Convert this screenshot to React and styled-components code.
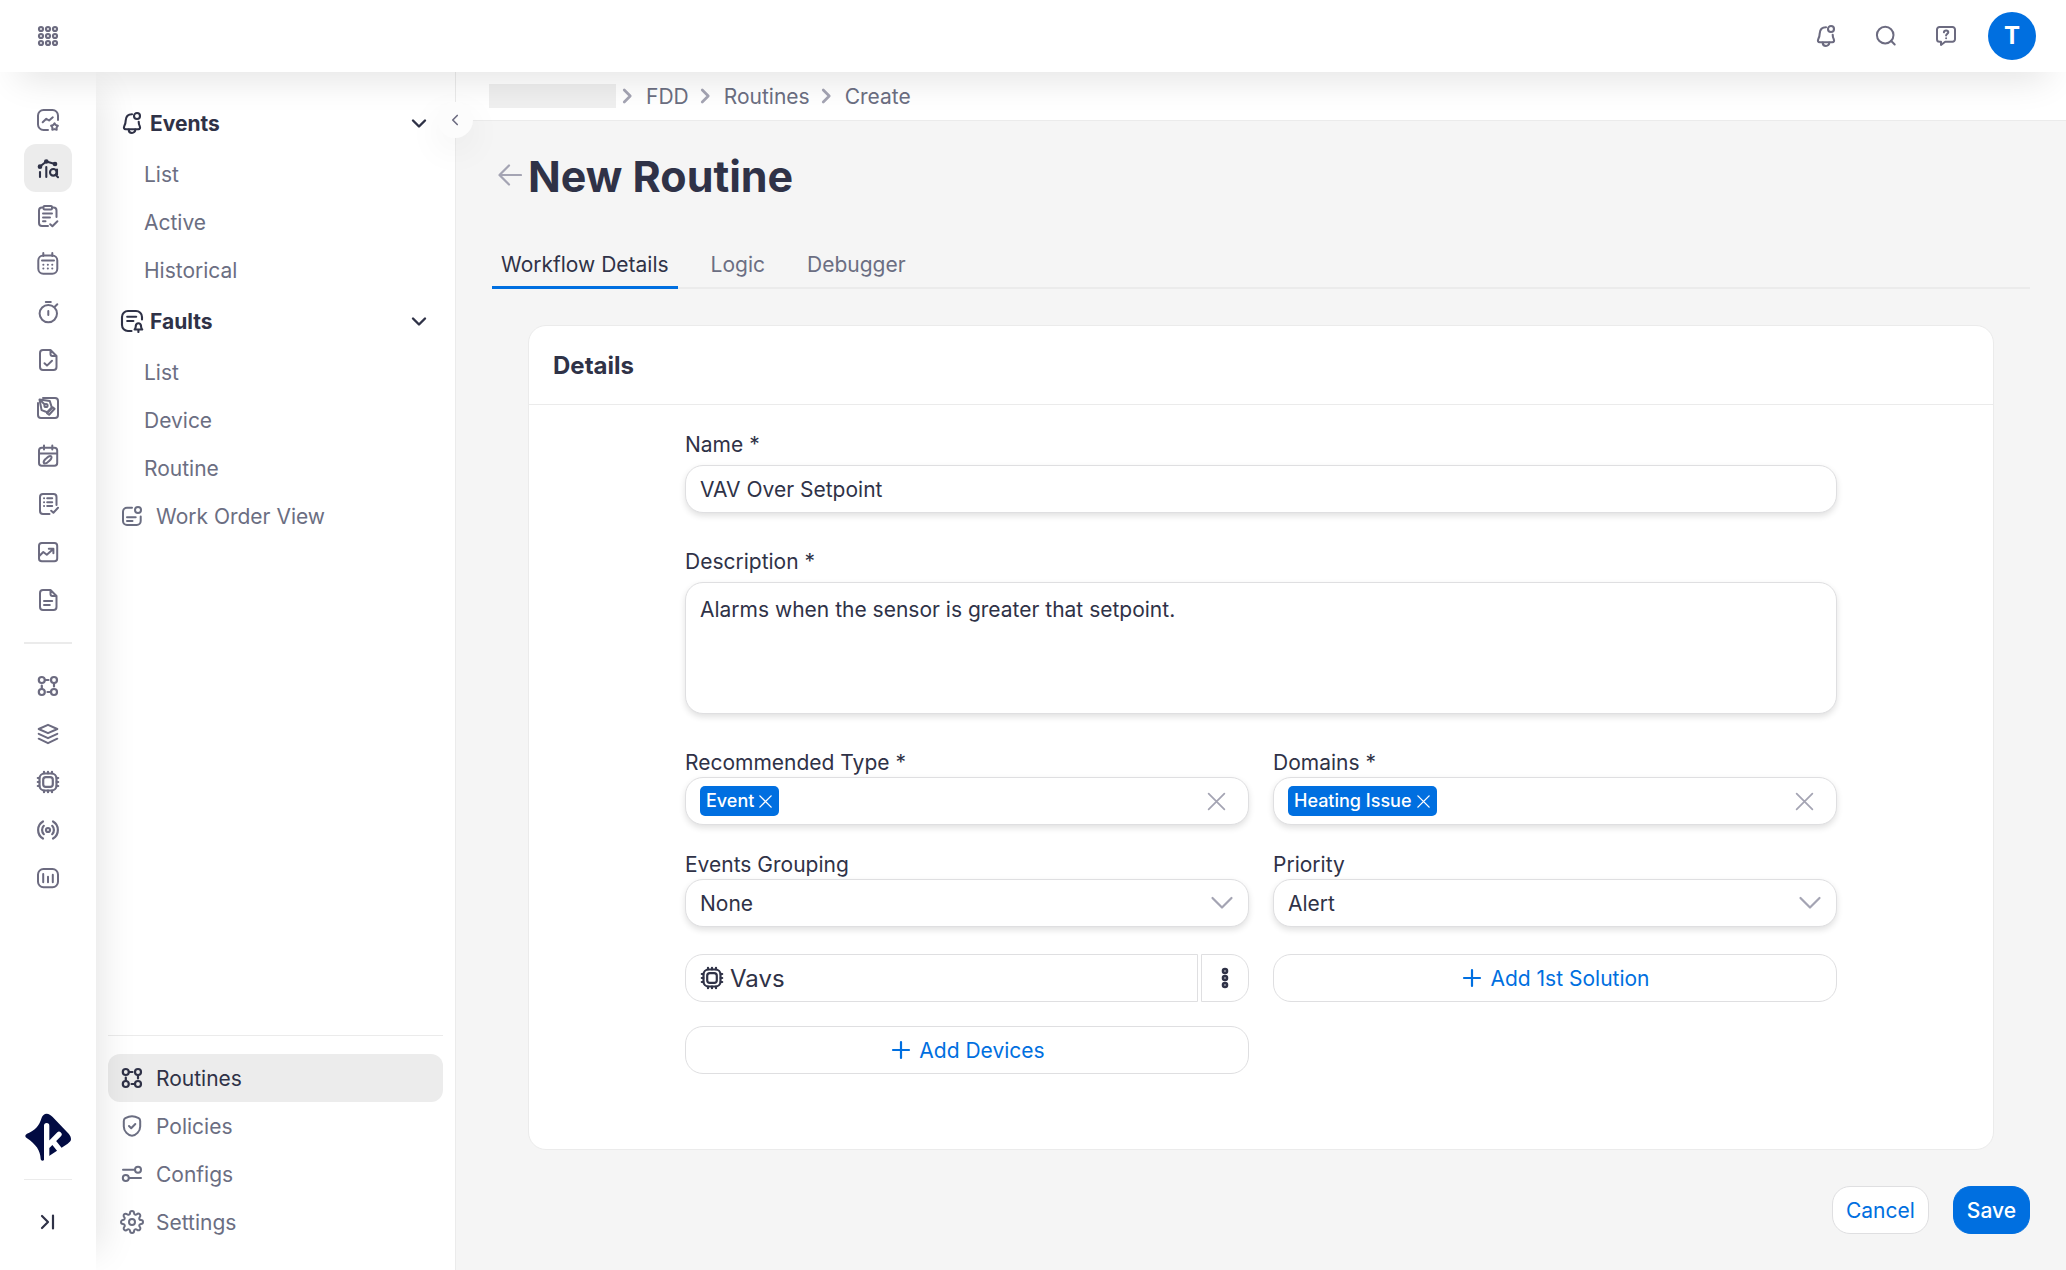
import styled, { createGlobalStyle, css } from 'styled-components';
import { useState } from 'react';
import { FiSettings } from 'react-icons/fi';

const color = {
  text: '#2f3247',
  muted: '#6b6e82',
  icon: '#6c6b80',
  faint: '#a4a4b3',
  blue: '#006fe0',
  page: '#f5f5f5',
  active: '#ececec',
  line: '#ebebeb',
  border: '#dfdfe1',
};

/* ---------- icons ---------- */

const Icon = ({ size = 24, stroke = 2, children }) => (
  <svg
    width={size}
    height={size}
    viewBox='0 0 24 24'
    fill='none'
    stroke='currentColor'
    strokeWidth={stroke}
    strokeLinecap='round'
    strokeLinejoin='round'
    aria-hidden='true'
  >
    {children}
  </svg>
);

const GridIcon = () => (
  <Icon stroke={2.2}>
    {[5, 12, 19].map(y =>
      [5, 12, 19].map(x => <circle key={`${x}-${y}`} cx={x} cy={y} r='2' />)
    )}
  </Icon>
);

const BellIcon = () => (
  <Icon stroke={2.1}>
    <path d='M12 3.3C8 3.3 5.9 6 5.7 9.5c-.1 2.8-.5 4-1.4 5.6-.8 1.6-.3 3.1 1.4 3.1h12.6c1.7 0 2.2-1.5 1.4-3.1-.7-1.3-1-2.6-1-4.3' />
    <path d='M8.7 18.5c0 4.6 6.600 4.600 6.600 0' />
    <circle cx='17' cy='5' r='3' />
  </Icon>
);

const SearchIcon = () => (
  <Icon>
    <circle cx='11.2' cy='11.1' r='8.3' />
    <path d='m17 16.800 3.700 3.700' />
  </Icon>
);

const HelpIcon = () => (
  <Icon>
    <path d='M5.500 3h13A2.500 2.500 0 0 1 21 5.500v9.700a2.500 2.500 0 0 1-2.500 2.500h-7.300L7 21v-3.300H5.500A2.500 2.500 0 0 1 3 15.200V5.500A2.500 2.500 0 0 1 5.500 3Z' />
    <path d='M9.900 8.300c.2-2.600 4.400-2.400 4.400 0 0 1.600-2.200 1.500-2.200 3.200M12.100 14.200v.1' />
  </Icon>
);

const DashboardIcon = () => (
  <Icon>
    <path d='M12 22H7.500A5.500 5.500 0 0 1 2 16.500v-9A5.500 5.500 0 0 1 7.500 2h9A5.500 5.500 0 0 1 22 7.500V12' />
    <path d='m6.700 14.300 3.600-3.500 2.800 1.700 3.700-3.200' />
    <path d='m18.500 15.300 1.200 1.700 2.200.6-1.300 1.900.1 2.200-2.200-.6-2.200.6.1-2.200-1.300-1.900 2.200-.6Z' />
  </Icon>
);

const FddIcon = () => (
  <Icon stroke={2.1}>
    <path d='m4 10.500 6.300-5L19 8' />
    <circle cx='4' cy='10.700' r='1.300' />
    <circle cx='10.300' cy='5.500' r='1.300' />
    <circle cx='19' cy='8' r='1.300' />
    <path d='M4 16v5M10.300 11v10' />
    <circle cx='17.300' cy='16.300' r='3.300' />
    <path d='M21 13.500v5.300M19.600 18.800 22 21.200' />
  </Icon>
);

const ClipboardIcon = () => (
  <Icon>
    <path d='M7 3.500H6a3 3 0 0 0-3 3V19a3 3 0 0 0 3 3h6M16.500 3.500h1a3 3 0 0 1 3 3V13' />
    <path d='M8.500 2H15a1 1 0 0 1 1 1v1.500a1 1 0 0 1-1 1H8.500a1 1 0 0 1-1-1V3a1 1 0 0 1 1-1Z' />
    <path d='M7 9.500h9M7 13.400h7M7 17.300h2.500M14.200 20.200l2.200 2 5-5' />
  </Icon>
);

const CalendarIcon = () => (
  <Icon>
    <rect x='2.300' y='3.500' width='19' height='18.300' rx='5' />
    <path d='M7.300 1v3M16.300 1v3M6 8.500h12' />
    <path d='M7.300 12.800h.1M11.800 12.800h.1M16.200 12.800h.1M7.300 16.600h.1M11.800 16.600h.1M16.200 16.600h.1' />
  </Icon>
);

const StopwatchIcon = () => (
  <Icon>
    <circle cx='12.300' cy='13.600' r='8.700' />
    <path d='M9.800 2h5M12.300 11v4M19 6.500l2.300-2.300' />
  </Icon>
);

const FileShape = () => (
  <path d='M14.500 2H7a3 3 0 0 0-3 3v14a3 3 0 0 0 3 3h10.500a3 3 0 0 0 3-3V8l-6-6Zm0 0v4a2 2 0 0 0 2 2h4' />
);

const FileCheckIcon = () => (
  <Icon>
    <FileShape />
    <path d='m8.500 15.200 2.500 2.400 5-4.800' />
  </Icon>
);

const PenToolIcon = () => (
  <Icon>
    <path d='M7 2h12a3 3 0 0 1 3 3v14a3 3 0 0 1-3 3H5a3 3 0 0 1-3-3V7' />
    <path d='m3.500 3.500 10.300 1.600 2 6.400-4.600 4.800-5.600-2.200Z' />
    <circle cx='10' cy='9.500' r='1.600' />
    <path d='m4 4 4.500 4.200M11 17.300l5.700-6 1.900 1.500-5.500 6Z' />
  </Icon>
);

const CalendarEditIcon = () => (
  <Icon>
    <rect x='3' y='3.800' width='18.200' height='18' rx='2.800' />
    <path d='M8 1.500v4M16.300 1.500v4M3 9.400h18' />
    <path d='M8 19.300c-.8-1.200 0-2.800 1.500-4.200 2-2 4.300-3.700 5.600-2.800 1.200 1.200-.2 3.100-1.700 4.500-1.600 1.600-4.200 3.300-5.400 2.500Z' />
  </Icon>
);

const ListCheckIcon = () => (
  <Icon>
    <path d='M13.500 22H7a3 3 0 0 1-3-3V5a3 3 0 0 1 3-3h10.500a3 3 0 0 1 3 3v8' />
    <path d='M8 6.300h.1M8 10.200h.1M8 14.100h.1M11.200 6.300h5M11.200 10.200h5M11.200 14.100h5M15.200 18.700l2.200 2 4.600-5' />
  </Icon>
);

const TrendIcon = () => (
  <Icon>
    <rect x='3' y='3' width='18.200' height='18.200' rx='2.800' />
    <path d='m3.300 16 4-4 3.500 2.800 6.200-5.600M12.800 8.800h4.600v4.400' />
  </Icon>
);

const FileTextIcon = () => (
  <Icon>
    <FileShape />
    <path d='M8 13h8.200M8 17h5.800' />
  </Icon>
);

const NodesIcon = () => (
  <Icon stroke={2.2}>
    <circle cx='5.800' cy='6' r='3' />
    <circle cx='18' cy='6' r='3' />
    <circle cx='5.800' cy='18' r='3' />
    <circle cx='18' cy='18' r='3' />
    <path d='M9 6h3.500M18 9.300v3.200M5.800 14.700v-3.200M14.700 18h-3.200' />
  </Icon>
);

const LayersIcon = () => (
  <Icon>
    <path d='m12 2.800 9.300 4.200L12 11.200 2.700 7Z' />
    <path d='m2.700 11.800 9.300 4.400 9.300-4.400M2.700 16.700 12 21.200l9.300-4.500' />
  </Icon>
);

const ChipIcon = () => (
  <Icon stroke={2.2}>
    <rect x='3.500' y='3.500' width='17' height='17' rx='5' />
    <rect x='7.200' y='7.200' width='9.600' height='9.600' rx='2.600' />
    <path d='M8 1.800v1.500M12 1.800v1.500M16 1.800v1.500M8 20.700v1.500M12 20.700v1.500M16 20.700v1.500M1.800 8h1.500M1.800 12h1.500M1.800 16h1.500M20.700 8h1.500M20.700 12h1.500M20.700 16h1.500' />
  </Icon>
);

const BroadcastIcon = () => (
  <Icon stroke={2.2}>
    <circle cx='12' cy='12' r='2' />
    <path d='M7.800 7.800a6 6 0 0 0 0 8.400M16.200 7.800a6 6 0 0 1 0 8.400M7 3.500c-6.500 3.700-6.500 13.300 0 17M17 3.500c6.500 3.700 6.500 13.300 0 17' />
  </Icon>
);

const BarsIcon = () => (
  <Icon>
    <rect x='2' y='3' width='20' height='18.200' rx='5.500' />
    <path d='M7.200 8v8.200M12 10.800v5.400M16.800 8.800v7.400' />
  </Icon>
);

const FaultIcon = () => (
  <Icon stroke={2.1}>
    <path d='M11.500 22H8a6 6 0 0 1-6-6V8a6 6 0 0 1 6-6h8a6 6 0 0 1 6 6v2.500' />
    <path d='M7.200 7.700h9M7.200 12h6.200' />
    <path d='M14.600 20.500c1-1 1-2 1.200-3.500.3-3.600 4.900-3.600 5.200 0 .2 1.500.2 2.500 1.200 3.500ZM18.400 20.500V23' />
  </Icon>
);

const WorkOrderIcon = () => (
  <Icon>
    <path d='M12 3.800H7a4 4 0 0 0-4 4V17a4 4 0 0 0 4 4h9.700a4 4 0 0 0 4-4v-4.500' />
    <circle cx='18' cy='6' r='3' />
    <path d='M7 13.300h8.700M7 17h5.500' />
  </Icon>
);

const ShieldIcon = () => (
  <Icon>
    <path d='M12 2.300c2.600 0 5 1 6.700 1.900 1 .6 1.500 1.500 1.500 2.700v5.500c0 5-4.400 9.300-8.200 9.300s-8.200-4.300-8.200-9.300V6.900c0-1.200.5-2.100 1.500-2.700C7 3.300 9.400 2.300 12 2.300Z' />
    <path d='m9 12 2.200 2.200L15.300 10' />
  </Icon>
);

const ConfigIcon = () => (
  <Icon>
    <circle cx='18' cy='7.800' r='3' />
    <circle cx='5.800' cy='16' r='3' />
    <path d='M3 7.800h12M9 16h12' />
  </Icon>
);

const ExpandIcon = () => (
  <Icon stroke={2.2}>
    <path d='m6 6 6 6-6 6M17 5.500v13' />
  </Icon>
);

const ChevronDown = () => (
  <Icon stroke={2.4}>
    <path d='m6 9.500 6 6 6-6' />
  </Icon>
);

const SelectArrow = () => (
  <Icon stroke={2.2}>
    <path d='m2.500 7 9.500 9.500L21.500 7' />
  </Icon>
);

const ChevronLeft = () => (
  <Icon size={18} stroke={2.2}>
    <path d='m15 6-6 6 6 6' />
  </Icon>
);

const CrumbArrow = () => (
  <Icon size={18} stroke={3.6}>
    <path d='m7 4 8 8-8 8' />
  </Icon>
);

const BackArrow = () => (
  <Icon stroke={2.2}>
    <path d='M23 12H2M11 2.500 1.500 12 11 21.500' />
  </Icon>
);

const CrossIcon = ({ size, stroke }) => (
  <Icon size={size} stroke={stroke}>
    <path d='m3 3 18 18M21 3 3 21' />
  </Icon>
);

const PlusIcon = () => (
  <Icon stroke={2.2}>
    <path d='M12 4v16M4 12h16' />
  </Icon>
);

const DotsIcon = () => (
  <Icon stroke={2.6}>
    <circle cx='12' cy='5' r='2' />
    <circle cx='12' cy='12' r='2' />
    <circle cx='12' cy='19' r='2' />
  </Icon>
);

const Logo = () => (
  <svg width='48' height='48' viewBox='0 0 144 144' role='img' aria-label='Home'>
    <path
      fill='#020b42'
      d='M68 2c7 0 12 4 18 10l48 50c5 6 7 11 7 17 0 5-4 9-10 13l-57 38-14 11c-3 3-9 3-10-3-1-26-14-44-42-63-6-4-5-10 1-13 24-10 36-22 44-48 2-7 8-12 15-12Z'
    />
    <path
      fill='none'
      stroke='#fff'
      strokeWidth='16'
      strokeLinecap='round'
      d='M68 38v112M105 64 72 98M86 84l24 30'
    />
  </svg>
);

/* ---------- data ---------- */

const railMain = [
  ['Dashboards', DashboardIcon],
  ['Fault detection', FddIcon],
  ['Tasks', ClipboardIcon],
  ['Schedules', CalendarIcon],
  ['Timers', StopwatchIcon],
  ['Approvals', FileCheckIcon],
  ['Designer', PenToolIcon],
  ['Planner', CalendarEditIcon],
  ['Checklists', ListCheckIcon],
  ['Trends', TrendIcon],
  ['Reports', FileTextIcon],
];

const railTools = [
  ['Workflows', NodesIcon],
  ['Layers', LayersIcon],
  ['Devices', ChipIcon],
  ['Signals', BroadcastIcon],
  ['Meters', BarsIcon],
];

const groups = [
  { name: 'Events', Glyph: BellIcon, links: ['List', 'Active', 'Historical'] },
  { name: 'Faults', Glyph: FaultIcon, links: ['List', 'Device', 'Routine'] },
];

const bottomLinks = [
  ['Routines', NodesIcon],
  ['Policies', ShieldIcon],
  ['Configs', ConfigIcon],
  ['Settings', () => <FiSettings size={24} />],
];

const tabs = ['Workflow Details', 'Logic', 'Debugger'];

/* ---------- pieces ---------- */

const Header = () => (
  <HeaderBar>
    <IconButton type='button' aria-label='Apps'>
      <GridIcon />
    </IconButton>
    <HeaderTools>
      <IconButton type='button' aria-label='Notifications'>
        <BellIcon />
      </IconButton>
      <IconButton type='button' aria-label='Search'>
        <SearchIcon />
      </IconButton>
      <IconButton type='button' aria-label='Help'>
        <HelpIcon />
      </IconButton>
      <Avatar type='button'>T</Avatar>
    </HeaderTools>
  </HeaderBar>
);

const RailNav = () => (
  <Rail>
    {railMain.map(([label, Glyph], i) => (
      <RailLink key={label} href='#' aria-label={label} $active={i === 1}>
        <Glyph />
      </RailLink>
    ))}
    <RailRule $thick />
    {railTools.map(([label, Glyph]) => (
      <RailLink key={label} href='#' aria-label={label}>
        <Glyph />
      </RailLink>
    ))}
    <RailFoot>
      <Logo />
      <RailRule />
      <IconButton type='button' aria-label='Expand menu' $dark>
        <ExpandIcon />
      </IconButton>
    </RailFoot>
  </Rail>
);

const SideNav = () => {
  const [open, setOpen] = useState({ Events: true, Faults: true });

  return (
    <Side>
      <nav>
        {groups.map(({ name, Glyph, links }) => (
          <div key={name}>
            <GroupButton
              type='button'
              aria-expanded={open[name]}
              onClick={() => setOpen({ ...open, [name]: !open[name] })}
            >
              <Glyph />
              <Text>{name}</Text>
              <ChevronDown />
            </GroupButton>
            {open[name] &&
              links.map(link => (
                <SubLink key={link} href='#'>
                  <Text>{link}</Text>
                </SubLink>
              ))}
          </div>
        ))}
        <SideLink href='#'>
          <WorkOrderIcon />
          <Text>Work Order View</Text>
        </SideLink>
      </nav>
      <SideFoot>
        {bottomLinks.map(([label, Glyph], i) => (
          <SideLink key={label} href='#' $active={i === 0}>
            <Glyph />
            <Text>{label}</Text>
          </SideLink>
        ))}
      </SideFoot>
      <Collapse type='button' aria-label='Collapse'>
        <ChevronLeft />
      </Collapse>
    </Side>
  );
};

const TagField = ({ id, label, tag }) => (
  <Field>
    <Label htmlFor={id}>{label}</Label>
    <TagBox>
      <Tag>
        {tag}
        <TagRemove type='button' aria-label={`Remove ${tag}`}>
          <CrossIcon size={15} stroke={2.2} />
        </TagRemove>
      </Tag>
      <TagInput id={id} />
      <ClearButton type='button' aria-label='Clear'>
        <CrossIcon size={21} stroke={2} />
      </ClearButton>
    </TagBox>
  </Field>
);

const SelectField = ({ id, label, options }) => (
  <Field>
    <Label htmlFor={id}>{label}</Label>
    <SelectBox>
      <Select id={id}>
        {options.map(o => (
          <option key={o}>{o}</option>
        ))}
      </Select>
      <SelectArrow />
    </SelectBox>
  </Field>
);

const App = () => {
  const [tab, setTab] = useState(tabs[0]);

  return (
    <Page>
      <GlobalStyle />
      <Header />
      <Body>
        <RailNav />
        <SideNav />
        <Main>
          <Crumbs aria-label='Breadcrumb'>
            <CrumbBlank />
            <CrumbArrow />
            <a href='#'>FDD</a>
            <CrumbArrow />
            <a href='#'>Routines</a>
            <CrumbArrow />
            <a href='#'>Create</a>
          </Crumbs>
          <Content>
            <TitleRow>
              <BackLink href='#' aria-label='Back'>
                <BackArrow />
              </BackLink>
              <Title>New Routine</Title>
            </TitleRow>
            <Tabs role='tablist'>
              {tabs.map(t => (
                <Tab
                  key={t}
                  type='button'
                  role='tab'
                  aria-selected={t === tab}
                  $active={t === tab}
                  onClick={() => setTab(t)}
                >
                  {t}
                </Tab>
              ))}
            </Tabs>
            <Card>
              <CardTitle>Details</CardTitle>
              <Form>
                <WideField>
                  <Label htmlFor='name'>Name *</Label>
                  <TextInput id='name' defaultValue='VAV Over Setpoint' />
                </WideField>
                <WideField>
                  <Label htmlFor='description'>Description *</Label>
                  <TextArea
                    id='description'
                    defaultValue='Alarms when the sensor is greater that setpoint.'
                  />
                </WideField>
                <TagField id='type' label='Recommended Type *' tag='Event' />
                <TagField id='domains' label='Domains *' tag='Heating Issue' />
                <SelectField id='grouping' label='Events Grouping' options={['None', 'Device']} />
                <SelectField id='priority' label='Priority' options={['Alert', 'Fault']} />
                <Column>
                  <DeviceRow>
                    <DeviceName type='button'>
                      <ChipIcon />
                      <Text>Vavs</Text>
                    </DeviceName>
                    <DeviceMenu type='button' aria-label='Device options'>
                      <DotsIcon />
                    </DeviceMenu>
                  </DeviceRow>
                  <AddButton type='button'>
                    <PlusIcon />
                    <Text>Add Devices</Text>
                  </AddButton>
                </Column>
                <Column>
                  <AddButton type='button'>
                    <PlusIcon />
                    <Text>Add 1st Solution</Text>
                  </AddButton>
                </Column>
              </Form>
            </Card>
            <Actions>
              <ActionButton type='button'>
                <Text>Cancel</Text>
              </ActionButton>
              <ActionButton type='button' $primary>
                <Text>Save</Text>
              </ActionButton>
            </Actions>
          </Content>
        </Main>
      </Body>
    </Page>
  );
};

export default App;

/* ---------- styles ---------- */

const GlobalStyle = createGlobalStyle`
  *, *::before, *::after {
    box-sizing: border-box;
  }
  body {
    margin: 0;
    background: ${color.page};
    color: ${color.text};
    font-family: Inter, 'Open Sans', sans-serif;
    font-size: 21px;
    line-height: 30px;
  }
  button, input, select, textarea {
    margin: 0;
    padding: 0;
    border: 0;
    background: none;
    color: inherit;
    font: inherit;
  }
  button {
    cursor: pointer;
  }
  a {
    color: inherit;
    text-decoration: none;
  }
  svg {
    display: block;
    flex-shrink: 0;
  }
`;

const Page = styled.div`
  display: flex;
  flex-direction: column;
  min-height: 100vh;
`;

/* drops the text a touch so it centers on the icons */
const Text = styled.span`
  display: block;
  padding-top: 2px;
`;

const HeaderBar = styled.header`
  position: relative;
  z-index: 3;
  display: flex;
  justify-content: space-between;
  align-items: center;
  height: 72px;
  padding: 0 30px 0 24px;
  background: #fff;
  box-shadow: 0 24px 36px -18px rgba(0, 0, 0, 0.12);
`;

const HeaderTools = styled.div`
  display: flex;
  align-items: center;
  gap: 12px;

  > :last-child {
    margin-left: 6px;
  }
`;

const IconButton = styled.button`
  display: flex;
  justify-content: center;
  align-items: center;
  width: 48px;
  height: 48px;
  color: ${props => (props.$dark ? color.text : color.icon)};
`;

const Avatar = styled.button`
  width: 48px;
  height: 48px;
  border-radius: 50%;
  background: ${color.blue};
  color: #fff;
  font-size: 24px;
  font-weight: 700;
`;

const Body = styled.div`
  display: flex;
  flex: 1;
`;

const Rail = styled.nav`
  position: relative;
  z-index: 2;
  display: flex;
  flex-direction: column;
  align-items: center;
  flex: 0 0 96px;
  padding: 24px 0;
  background: #fff;
  box-shadow: 24px 0 36px -18px rgba(0, 0, 0, 0.1);
`;

const RailLink = styled.a`
  display: flex;
  justify-content: center;
  align-items: center;
  width: 48px;
  height: 48px;
  border-radius: 12px;
  color: ${props => (props.$active ? color.text : color.icon)};
  background: ${props => (props.$active ? color.active : 'transparent')};
`;

const RailRule = styled.hr`
  width: 48px;
  height: ${props => (props.$thick ? 2 : 1)}px;
  margin: 18px 0;
  border: 0;
  background: ${color.line};
`;

const RailFoot = styled.div`
  display: flex;
  flex-direction: column;
  align-items: center;
  margin-top: auto;
`;

const Side = styled.aside`
  position: relative;
  display: flex;
  flex-direction: column;
  flex: 0 0 360px;
  padding: 24px 12px;
  background: #fff;
  border-right: 1px solid ${color.line};
`;

const sideRow = css`
  display: flex;
  align-items: center;
  width: 100%;
  padding: 0 12px;
`;

const GroupButton = styled.button`
  ${sideRow}
  gap: 6px;
  height: 54px;
  font-weight: 700;

  svg:last-child {
    margin-left: auto;
  }
`;

const SubLink = styled.a`
  ${sideRow}
  height: 48px;
  padding-left: 36px;
  color: ${color.muted};
`;

const SideLink = styled.a`
  ${sideRow}
  gap: 12px;
  height: 48px;
  border-radius: 12px;
  color: ${props => (props.$active ? color.text : color.muted)};
  background: ${props => (props.$active ? color.active : 'transparent')};
`;

const SideFoot = styled.nav`
  margin-top: auto;
  padding-top: 18px;
  border-top: 1px solid ${color.line};
`;

const Collapse = styled.button`
  position: absolute;
  z-index: 4;
  top: 30px;
  right: -18px;
  display: flex;
  justify-content: center;
  align-items: center;
  width: 36px;
  height: 36px;
  border-radius: 50%;
  background: #fcfcfc;
  color: ${color.icon};
  box-shadow: 0 12px 36px rgba(0, 0, 0, 0.06);
`;

const Main = styled.main`
  flex: 1;
  min-width: 0;
`;

const Crumbs = styled.nav`
  display: flex;
  align-items: center;
  height: 49px;
  padding: 0 33px;
  background: #fff;
  border-bottom: 1px solid ${color.line};
  color: ${color.muted};

  a {
    padding-top: 2px;
  }
  svg {
    color: ${color.faint};
    margin: 0 9px 0 8px;
  }
  svg:first-of-type {
    margin-left: 3px;
  }
`;

const CrumbBlank = styled.span`
  width: 127px;
  height: 24px;
  background: #efefef;
`;

const Content = styled.div`
  padding: 24px 36px 36px;
`;

const TitleRow = styled.div`
  display: flex;
  align-items: center;
  gap: 6px;
  height: 60px;
  padding-left: 6px;
`;

const BackLink = styled.a`
  color: ${color.faint};
`;

const Title = styled.h1`
  margin: 0;
  padding-top: 2px;
  font-size: 43px;
  line-height: 60px;
  font-weight: 700;
`;

const Tabs = styled.div`
  display: flex;
  gap: 24px;
  margin-top: 36px;
  box-shadow: inset 0 -2px ${color.line};
`;

const Tab = styled.button`
  height: 48px;
  padding: 3px 9px 0;
  border-bottom: 3px solid ${props => (props.$active ? color.blue : 'transparent')};
  color: ${props => (props.$active ? color.text : color.muted)};
`;

const Card = styled.section`
  margin: 36px 36px 0;
  padding-bottom: 75px;
  background: #fff;
  border: 1px solid ${color.line};
  border-radius: 18px;
`;

const CardTitle = styled.h2`
  margin: 0;
  padding: 25px 24px 23px;
  border-bottom: 1px solid ${color.line};
  font-size: 24px;
  line-height: 30px;
  font-weight: 700;
`;

const Form = styled.form`
  display: grid;
  grid-template-columns: 1fr 1fr;
  column-gap: 24px;
  padding: 24px 156px 0;
`;

const Label = styled.label`
  display: block;
  padding-top: 2px;
  line-height: 28px;
`;

const Field = styled.div`
  margin-bottom: 24px;
`;

const WideField = styled.div`
  grid-column: 1 / -1;
  margin-bottom: 33px;

  ${Label} {
    padding-bottom: 6px;
  }
`;

const box = css`
  width: 100%;
  height: 48px;
  border: 1px solid ${color.border};
  border-radius: 18px;
  background: #fff;
`;

const raised = css`
  ${box}
  box-shadow: 0 3px 6px rgba(0, 0, 0, 0.12);
`;

const TextInput = styled.input`
  ${raised}
  padding: 0 14px;
`;

const TextArea = styled.textarea`
  ${raised}
  display: block;
  height: 132px;
  padding: 12px 14px;
  resize: none;
`;

const TagBox = styled.div`
  ${raised}
  display: flex;
  align-items: center;
  padding: 0 21px 0 14px;
`;

const Tag = styled.span`
  display: flex;
  align-items: center;
  gap: 4px;
  height: 30px;
  padding: 0 6px;
  border-radius: 5px;
  background: ${color.blue};
  color: #fff;
  font-size: 18px;
  font-weight: 500;
`;

const TagRemove = styled.button`
  display: flex;
`;

const TagInput = styled.input`
  flex: 1;
  min-width: 0;
  outline: 0;
`;

const ClearButton = styled.button`
  display: flex;
  color: ${color.faint};
`;

const SelectBox = styled.div`
  position: relative;
  color: ${color.text};

  svg {
    position: absolute;
    top: 12px;
    right: 15px;
    color: ${color.faint};
    pointer-events: none;
  }
`;

const Select = styled.select`
  ${raised}
  appearance: none;
  padding: 2px 48px 0 14px;
`;

const Column = styled.div`
  display: flex;
  flex-direction: column;
  gap: 24px;
  margin-top: 3px;
`;

const DeviceRow = styled.div`
  display: flex;
  gap: 3px;
`;

const DeviceName = styled.button`
  ${box}
  flex: 1;
  display: flex;
  align-items: center;
  gap: 6px;
  padding: 0 14px;
  border-radius: 18px 0 0 18px;
  font-size: 24px;
`;

const DeviceMenu = styled.button`
  ${box}
  display: flex;
  justify-content: center;
  align-items: center;
  width: 48px;
  border-radius: 0 18px 18px 0;
`;

const AddButton = styled.button`
  ${box}
  display: flex;
  justify-content: center;
  align-items: center;
  gap: 6px;
  color: ${color.blue};
`;

const Actions = styled.div`
  display: flex;
  justify-content: flex-end;
  gap: 24px;
  margin-top: 36px;
`;

const ActionButton = styled.button`
  height: 48px;
  padding: 0 13px;
  border: 1px solid ${props => (props.$primary ? color.blue : color.border)};
  border-radius: 18px;
  background: ${props => (props.$primary ? color.blue : '#fff')};
  color: ${props => (props.$primary ? '#fff' : color.blue)};
  font-weight: ${props => (props.$primary ? 500 : 400)};
`;
